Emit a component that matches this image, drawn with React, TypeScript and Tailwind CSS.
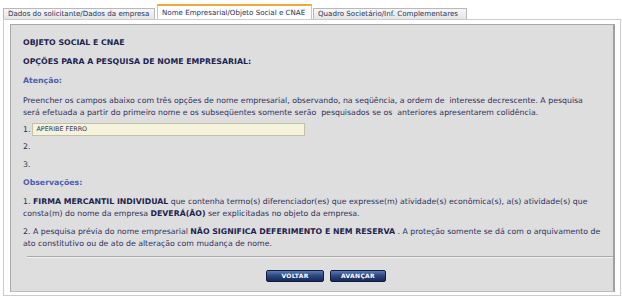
import React from "react";

const font = { fontFamily: '"DejaVu Sans", Verdana, sans-serif' };

export default function App() {
  return (
    <div className="w-[622px] h-[300px] bg-white relative" style={font}>
      {/* Tabs */}
      <div className="flex items-end h-[19px] pl-[3px]">
        <div className="h-[11px] w-[152px] border border-b-0 border-[#b9b9b9] bg-gradient-to-b from-[#f6f6f6] to-[#e6e6e6] text-[7.1px] leading-[10px] text-[#26305e] pl-[4px] whitespace-nowrap">
          Dados do solicitante/Dados da empresa
        </div>
        <div className="ml-[2px] h-[15px] w-[155px] border-t-[2px] border-[#f0a838] border-x border-x-[#c6c6c6] bg-white text-[7.1px] leading-[14px] text-[#26305e] pl-[4px] whitespace-nowrap">
          Nome Empresarial/Objeto Social e CNAE
        </div>
        <div className="ml-[1px] h-[11px] w-[154px] border border-b-0 border-[#b9b9b9] bg-gradient-to-b from-[#f6f6f6] to-[#e6e6e6] text-[7.1px] leading-[10px] text-[#26305e] pl-[4px] whitespace-nowrap">
          Quadro Societário/Inf. Complementares
        </div>
      </div>
      {/* Outer panel */}
      <div className="ml-[3px] w-[618px] h-[277px] border border-[#cccccc] bg-white pt-[4px] pl-[6px]">
        <div className="w-[605px] h-[268px] bg-[#dfdede] border-t border-l border-[#a9a9a9] border-r-[2px] border-r-[#a0a0a0] border-b border-b-[#bdbdbd] flex flex-col text-[7.8px] leading-[12px] text-[#2b2f5c]">
          <div className="pl-[12px] pr-[4px] pt-[12px]">
            <div className="font-bold text-[#1c2350]">OBJETO SOCIAL E CNAE</div>
            <div className="font-bold text-[#1c2350] mt-[7px]">OPÇÕES PARA A PESQUISA DE NOME EMPRESARIAL:</div>
            <div className="font-bold text-[#4a5fb2] mt-[7px]">Atenção:</div>
            <div className="mt-[8px] whitespace-pre">
              {"Preencher os campos abaixo com três opções de nome empresarial, observando, na seqüência, a ordem de  interesse decrescente. A pesquisa\nserá efetuada a partir do primeiro nome e os subseqüentes somente serão  pesquisados se os  anteriores apresentarem colidência."}
            </div>
            <div className="mt-[4px] flex items-center h-[13px]">
              <span>1.</span>
              <div className="ml-[2px] w-[273px] h-[13px] bg-[#f6f3dd] border border-[#c4c0a6] text-[6.4px] leading-[11px] pl-[3px] text-[#2b2f5c]">
                APERIBE FERRO
              </div>
            </div>
            <div className="mt-[5px]">2.</div>
            <div className="mt-[6px]">3.</div>
            <div className="font-bold text-[#4a5fb2] mt-[6px]">Observações:</div>
            <div className="mt-[7px] whitespace-nowrap">
              1. <b className="text-[#1c2350]">FIRMA MERCANTIL INDIVIDUAL</b> que contenha termo(s) diferenciador(es) que expresse(m) atividade(s) econômica(s), a(s) atividade(s) que
              <br />
              consta(m) do nome da empresa <b className="text-[#1c2350]">DEVERÁ(ÃO)</b> ser explicitadas no objeto da empresa.
            </div>
            <div className="mt-[6px] whitespace-nowrap">
              2. A pesquisa prévia do nome empresarial <b className="text-[#1c2350]">NÃO SIGNIFICA DEFERIMENTO E NEM RESERVA</b> . A proteção somente se dá com o arquivamento de
              <br />
              ato constitutivo ou de ato de alteração com mudança de nome.
            </div>
          </div>
          <div className="ml-[16px] mt-[6px] h-[1px] bg-[#a9a9a9] border-b border-[#f2f2f2] box-content" />
          <div className="flex justify-center gap-[6px] mt-[12px] pl-[28px]">
            <button className="w-[58px] h-[12px] rounded-[2px] bg-gradient-to-b from-[#5d79b3] via-[#2a457e] to-[#162a5c] border border-[#0f1c44] text-white text-[6px] leading-[10px] font-bold tracking-[0.3px]">
              VOLTAR
            </button>
            <button className="w-[56px] h-[12px] rounded-[2px] bg-gradient-to-b from-[#5d79b3] via-[#2a457e] to-[#162a5c] border border-[#0f1c44] text-white text-[6px] leading-[10px] font-bold tracking-[0.3px]">
              AVANÇAR
            </button>
          </div>
        </div>
      </div>
    </div>
  );
}
